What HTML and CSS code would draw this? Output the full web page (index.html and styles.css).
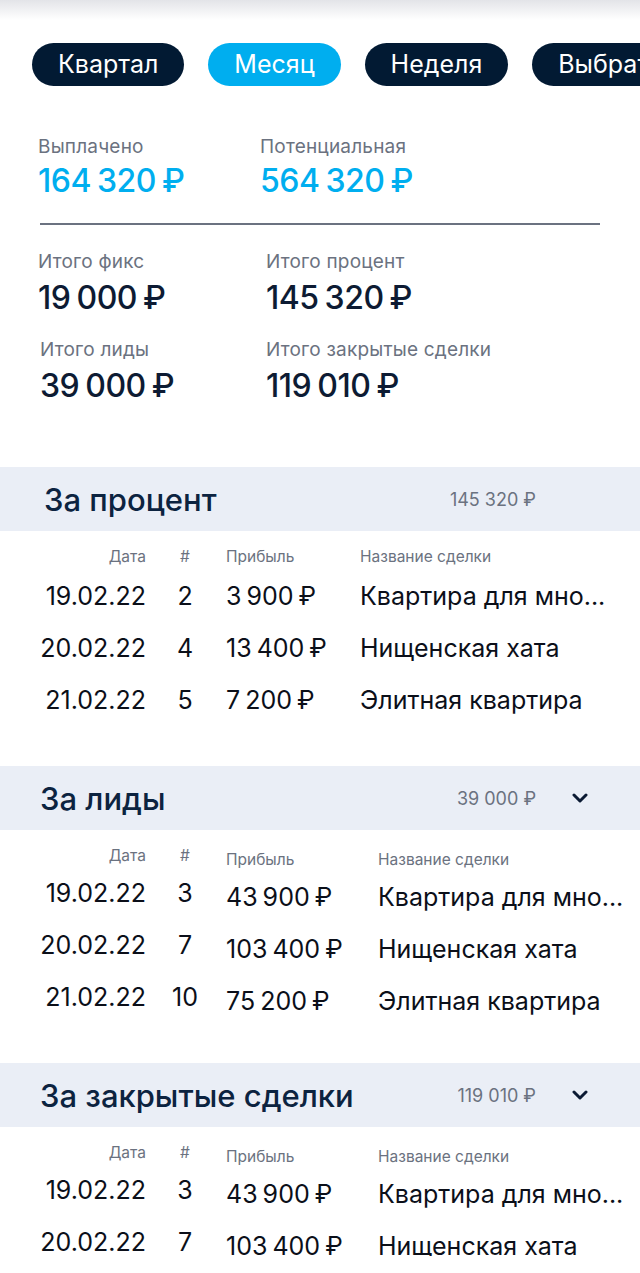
FILE: index.html
```html
<!DOCTYPE html>
<html lang="ru">
<head>
<meta charset="utf-8">
<link rel="stylesheet" href="styles.css">
</head>
<body>
<div class="topshade"></div>
<nav class="tabs">
  <span class="pill">Квартал</span>
  <span class="pill active">Месяц</span>
  <span class="pill">Неделя</span>
  <span class="pill">Выбрать</span>
</nav>

<section class="stats">
  <div class="stat-row top">
    <div class="stat"><div class="label">Выплачено</div><div class="value blue">164 320 ₽</div></div>
    <div class="stat"><div class="label">Потенциальная</div><div class="value blue">564 320 ₽</div></div>
  </div>
  <div class="divider"></div>
  <div class="stat-row">
    <div class="stat"><div class="label">Итого фикс</div><div class="value">19 000 ₽</div></div>
    <div class="stat"><div class="label">Итого процент</div><div class="value">145 320 ₽</div></div>
  </div>
  <div class="stat-row second">
    <div class="stat shift"><div class="label">Итого лиды</div><div class="value">39 000 ₽</div></div>
    <div class="stat"><div class="label">Итого закрытые сделки</div><div class="value">119 010 ₽</div></div>
  </div>
</section>

<section class="group first">
  <header class="band pad-first">
    <h2 class="title">За процент</h2>
    <span class="amount">145 320 ₽</span>
    <span class="chev hidden"></span>
  </header>
  <div class="tbl">
    <div class="col c-date"><span class="th">Дата</span><span class="td">19.02.22</span><span class="td">20.02.22</span><span class="td">21.02.22</span></div>
    <div class="col c-num"><span class="th">#</span><span class="td">2</span><span class="td">4</span><span class="td">5</span></div>
    <div class="col c-profit"><span class="th">Прибыль</span><span class="td">3 900 ₽</span><span class="td">13 400 ₽</span><span class="td">7 200 ₽</span></div>
    <div class="col c-name"><span class="th">Название сделки</span><span class="td">Квартира для мно...</span><span class="td">Нищенская хата</span><span class="td">Элитная квартира</span></div>
  </div>
</section>

<section class="group">
  <header class="band">
    <h2 class="title">За лиды</h2>
    <span class="amount">39 000 ₽</span>
    <span class="chev"><svg viewBox="0 0 16 10" width="16" height="10"><path d="M2 2 L8 8 L14 2" fill="none" stroke="#0b1a33" stroke-width="3" stroke-linecap="round" stroke-linejoin="round"/></svg></span>
  </header>
  <div class="tbl">
    <div class="col c-date"><span class="th">Дата</span><span class="td">19.02.22</span><span class="td">20.02.22</span><span class="td">21.02.22</span></div>
    <div class="col c-num"><span class="th">#</span><span class="td">3</span><span class="td">7</span><span class="td">10</span></div>
    <div class="col c-profit low"><span class="th">Прибыль</span><span class="td">43 900 ₽</span><span class="td">103 400 ₽</span><span class="td">75 200 ₽</span></div>
    <div class="col c-name low"><span class="th">Название сделки</span><span class="td">Квартира для мно...</span><span class="td">Нищенская хата</span><span class="td">Элитная квартира</span></div>
  </div>
</section>

<section class="group">
  <header class="band">
    <h2 class="title">За закрытые сделки</h2>
    <span class="amount">119 010 ₽</span>
    <span class="chev"><svg viewBox="0 0 16 10" width="16" height="10"><path d="M2 2 L8 8 L14 2" fill="none" stroke="#0b1a33" stroke-width="3" stroke-linecap="round" stroke-linejoin="round"/></svg></span>
  </header>
  <div class="tbl">
    <div class="col c-date"><span class="th">Дата</span><span class="td">19.02.22</span><span class="td">20.02.22</span></div>
    <div class="col c-num"><span class="th">#</span><span class="td">3</span><span class="td">7</span></div>
    <div class="col c-profit low"><span class="th">Прибыль</span><span class="td">43 900 ₽</span><span class="td">103 400 ₽</span></div>
    <div class="col c-name low"><span class="th">Название сделки</span><span class="td">Квартира для мно...</span><span class="td">Нищенская хата</span></div>
  </div>
</section>
</body>
</html>
```

FILE: styles.css
```css
* { box-sizing: border-box; }
html, body { margin: 0; padding: 0; background: #fff; }
body {
  font-family: Inter, "Noto Sans", sans-serif;
  color: #0d1b33;
  overflow: hidden;
  width: 640px;
}

.topshade {
  height: 20px;
  background: linear-gradient(#e3e4e8, rgba(255,255,255,0));
}

.tabs {
  display: flex;
  gap: 24px;
  padding-left: 32px;
  margin-top: 23px;
  white-space: nowrap;
  overflow: hidden;
}
.pill {
  flex: none;
  height: 43px;
  line-height: 43px;
  padding: 0 26px;
  border-radius: 22px;
  background: #021a33;
  color: #fff;
  font-size: 25px;
}
.pill.active { background: #00aeef; }

.stats { padding: 50px 40px 0 38px; }
.stat-row { display: grid; grid-template-columns: 228px 1fr; }
.stat-row.top { grid-template-columns: 222px 1fr; }
.stat-row.second { margin-top: 22px; }
.stat.shift { padding-left: 2px; }
.label {
  font-size: 19px;
  line-height: 22px;
  letter-spacing: 0.2px;
  color: #6b7280;
}
.value {
  font-size: 32px;
  line-height: 38px;
  font-weight: 500;
  word-spacing: -2px;
  letter-spacing: -0.5px;
  color: #0d1b33;
  margin-top: 6px;
}
.value.blue { color: #00aeef; margin-top: 4px; }
.divider {
  height: 2px;
  background: #6b7280;
  margin: 23px 0 26px 2px;
}

.group { margin-top: 52px; }
.group.first { margin-top: 62px; }
.band {
  display: flex;
  align-items: center;
  height: 64px;
  background: #eaeef6;
  padding: 0 52px 0 40px;
}
.band.pad-first { padding-left: 44px; }
.title {
  margin: 0;
  font-size: 31px;
  font-weight: 500;
  color: #0c2340;
}
.amount {
  margin-left: auto;
  font-size: 18px;
  color: #6b7280;
}
.chev {
  width: 16px;
  height: 10px;
  margin-left: 36px;
  display: flex;
}
.chev.hidden { visibility: hidden; }

.tbl {
  display: grid;
  grid-template-columns: 146px 54px 160px 1fr;
  padding-top: 17px;
}
.group:not(.first) .tbl { grid-template-columns: 146px 54px 178px 1fr; }
.col {
  display: flex;
  flex-direction: column;
  gap: 24px;
  white-space: nowrap;
}
.c-date { align-items: flex-end; }
.c-num { align-items: center; margin-left: 24px; width: 30px; }
.c-profit { margin-left: 26px; }
.th {
  font-size: 15.5px;
  line-height: 18px;
  color: #6b7280;
  margin-bottom: -8px;
}
.group:not(.first) .th { margin-bottom: -10px; }
.td {
  font-size: 25px;
  line-height: 28px;
  color: #0b0f19;
}
.c-profit .td { word-spacing: -2px; }
.low { padding-top: 4px; margin-bottom: -4px; }
```
